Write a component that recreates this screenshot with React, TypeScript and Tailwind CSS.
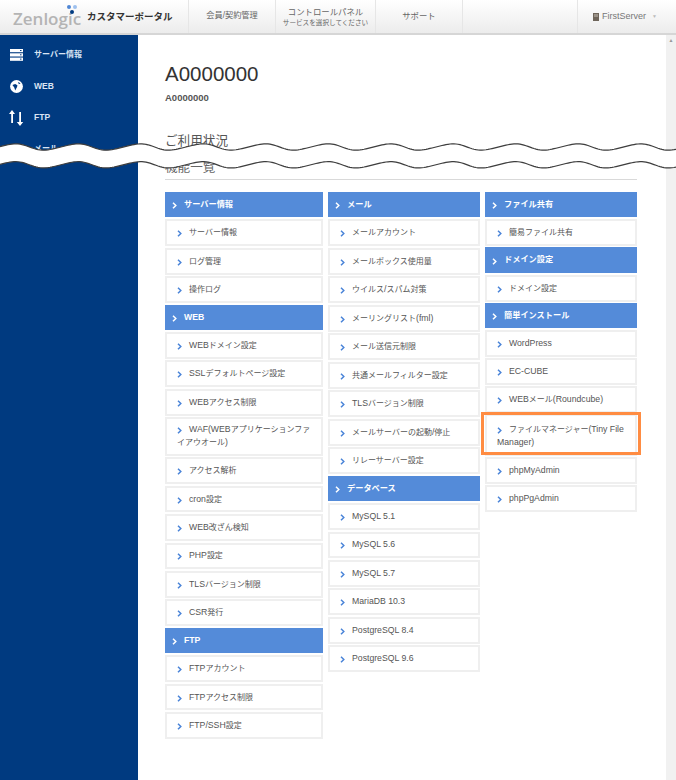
import type { ReactNode } from "react";

const F = '"Liberation Sans","Noto Sans CJK JP",sans-serif';

function Txt({ t, bold }: { t: string; bold?: boolean }) {
  const parts = t.split(/([\u3000-\u9fff\uff00-\uffef]+)/);
  return (
    <>
      {parts.map((p, i) =>
        i % 2 === 1 ? (
          <span key={i} className={bold ? "text-[8.2px]" : "text-[8px]"}>{p}</span>
        ) : (
          <span key={i}>{p}</span>
        )
      )}
    </>
  );
}

function Chevron({ white }: { white?: boolean }) {
  return (
    <svg width="5" height="7" viewBox="0 0 5 7" className="shrink-0 mt-[2px]">
      <path d="M1 0.8 L3.8 3.5 L1 6.2" fill="none" stroke={white ? "#ffffff" : "#4a84d8"} strokeWidth="1.5" />
    </svg>
  );
}

function Head({ t }: { t: string }) {
  return (
    <div className="h-[25.4px] mb-[1.95px] bg-[#548bd9] flex items-center gap-[7px] pl-[7px] text-[8.7px] font-bold text-white">
      <Chevron white />
      <span><Txt t={t} bold /></span>
    </div>
  );
}

function Item({ t, gap }: { t: string; gap: number }) {
  return (
    <div
      className="h-[26.8px] border-2 border-[#efefef] bg-white flex items-center gap-[7px] pl-[10px] text-[8.7px] text-[#555]"
      style={{ marginBottom: gap }}
    >
      <Chevron />
      <span><Txt t={t} /></span>
    </div>
  );
}

function TwoLine({ a, b, gap, pt, pb }: { a: string; b: string; gap: number; pt: number; pb: number }) {
  return (
    <div
      className="border-2 border-[#efefef] bg-white pl-[10px] text-[8.7px] leading-[13px] text-[#555]"
      style={{ marginBottom: gap, paddingTop: pt, paddingBottom: pb }}
    >
      <div className="flex items-center gap-[7px] h-[13px] whitespace-nowrap">
        <Chevron />
        <span><Txt t={a} /></span>
      </div>
      <div className="h-[13px] whitespace-nowrap"><Txt t={b} /></div>
    </div>
  );
}

type E = { h?: string; t?: string; a?: string; b?: string; hl?: boolean };
const col1: E[] = [
  { h: "サーバー情報" }, { t: "サーバー情報" }, { t: "ログ管理" }, { t: "操作ログ" },
  { h: "WEB" }, { t: "WEBドメイン設定" }, { t: "SSLデフォルトページ設定" }, { t: "WEBアクセス制限" },
  { a: "WAF(WEBアプリケーションファ", b: "イアウオール)" }, { t: "アクセス解析" }, { t: "cron設定" }, { t: "WEB改ざん検知" },
  { t: "PHP設定" }, { t: "TLSバージョン制限" }, { t: "CSR発行" },
  { h: "FTP" }, { t: "FTPアカウント" }, { t: "FTPアクセス制限" }, { t: "FTP/SSH設定" },
];
const col2: E[] = [
  { h: "メール" }, { t: "メールアカウント" }, { t: "メールボックス使用量" }, { t: "ウイルス/スパム対策" },
  { t: "メーリングリスト(fml)" }, { t: "メール送信元制限" }, { t: "共通メールフィルター設定" }, { t: "TLSバージョン制限" },
  { t: "メールサーバーの起動/停止" }, { t: "リレーサーバー設定" },
  { h: "データベース" }, { t: "MySQL 5.1" }, { t: "MySQL 5.6" }, { t: "MySQL 5.7" }, { t: "MariaDB 10.3" }, { t: "PostgreSQL 8.4" }, { t: "PostgreSQL 9.6" },
];
const col3: E[] = [
  { h: "ファイル共有" }, { t: "簡易ファイル共有" }, { h: "ドメイン設定" }, { t: "ドメイン設定" },
  { h: "簡単インストール" }, { t: "WordPress" }, { t: "EC-CUBE" }, { t: "WEBメール(Roundcube)" },
  { a: "ファイルマネージャー(Tiny File", b: "Manager)", hl: true }, { t: "phpMyAdmin" }, { t: "phpPgAdmin" },
];

function Column({ items, w, gap }: { items: E[]; w: string; gap: number }) {
  return (
    <div className={w}>
      {items.map((e, i) => {
        if (e.h) return <Head key={i} t={e.h} />;
        if (e.hl) {
          return (
            <div key={i} className="relative">
              <TwoLine a={e.a!} b={e.b!} gap={gap} pt={6.3} pb={5.3} />
              <div className="absolute -left-[4px] -right-[4px] -top-[2.5px] bottom-[1.4px] border-[3px] border-[#ff8c42]" />
            </div>
          );
        }
        if (e.a) return <TwoLine key={i} a={e.a} b={e.b!} gap={gap} pt={4.2} pb={4.15} />;
        return <Item key={i} t={e.t!} gap={gap} />;
      })}
    </div>
  );
}

function NavCell({ w, children }: { w: string; children?: ReactNode }) {
  return <div className={`${w} h-full border-r border-[#e6e6e6] flex flex-col items-center justify-center text-[#666]`}>{children}</div>;
}

function ServerIcon() {
  return (
    <svg width="13" height="12" viewBox="0 0 13 12" fill="#fff">
      <rect x="0" y="0" width="13" height="3.2" />
      <rect x="0" y="4.3" width="13" height="3.2" />
      <rect x="0" y="8.6" width="13" height="3.2" />
      <rect x="10" y="1" width="1.5" height="1" fill="#003a80" />
      <rect x="10" y="5.3" width="1.5" height="1" fill="#003a80" />
      <rect x="10" y="9.6" width="1.5" height="1" fill="#003a80" />
    </svg>
  );
}
function GlobeIcon() {
  return (
    <svg width="13" height="13" viewBox="0 0 14 14">
      <circle cx="7" cy="7" r="6.9" fill="#fff" />
      <path d="M2.6 5.4 L5.6 4.2 L8 5.6 L7.6 7.6 L5.6 11.2 L4.6 8.2 Z M8.5 2.2 L11.4 3.6 L9.6 4.6 Z" fill="#003a80" />
    </svg>
  );
}
function ArrowsIcon() {
  return (
    <svg width="16" height="17" viewBox="0 0 16 17" fill="#fff">
      <path d="M4 1 L7 5 L5 5 L5 14 L3.2 14 L3.2 5 L1 5 Z" />
      <path d="M12 17 L15.2 13 L13 13 L13 3 L11.2 3 L11.2 13 L8.8 13 Z" />
    </svg>
  );
}
function MailIcon() {
  return (
    <svg width="13" height="10" viewBox="0 0 13 10" fill="#fff"><rect width="13" height="10" /></svg>
  );
}

function SideRow({ icon, t }: { icon: ReactNode; t: string }) {
  return (
    <div className="h-[31.4px] flex items-center pl-[8px]">
      <div className="w-[16px] flex justify-center">{icon}</div>
      <span className="ml-[10px] text-[8.5px] text-[#d9e4f4] font-bold"><Txt t={t} /></span>
    </div>
  );
}

function wavePoints(off: number) {
  const pts: [number, number][] = [];
  for (let x = 0; x <= 676; x += 2) {
    const ph = (2 * Math.PI * (x - 14)) / 62.5;
    pts.push([x, 147 + off - 3.1 * Math.cos(ph) - 0.3 * Math.sin(2 * ph)]);
  }
  return pts;
}
const toLine = (p: [number, number][]) => p.map(([x, y], i) => `${i ? "L" : "M"}${x} ${y.toFixed(2)}`).join(" ");
const top = wavePoints(0);
const bot = wavePoints(17.8);
const band = toLine(top) + " " + [...bot].reverse().map(([x, y]) => `L${x} ${y.toFixed(2)}`).join(" ") + " Z";

export default function App() {
  return (
    <div className="relative w-[676px] h-[780px] overflow-hidden bg-white" style={{ fontFamily: F }}>
      <header className="h-[35px] flex bg-gradient-to-b from-white to-[#ececec] border-b-2 border-[#d6d6d6]">
        <div className="w-[189px] h-full border-r border-[#e6e6e6] flex items-center relative">
          <span className="ml-[13px] text-[17px] text-[#b4b4b4] leading-none mt-[3px]" style={{ fontFamily: '"Open Sans",sans-serif', fontWeight: 600 }}>Zenlogic</span>
          <span className="ml-[6px] text-[9.5px] font-bold text-[#333] mt-[2px] whitespace-nowrap">カスタマーポータル</span>
          <span className="absolute left-[67px] top-[5px] w-[4px] h-[4px] rounded-full bg-[#4f86d4]" />
          <span className="absolute left-[73px] top-[5px] w-[4px] h-[4px] rounded-full bg-[#9dc0ee]" />
          <span className="absolute left-[70px] top-[10px] w-[4px] h-[4px] rounded-full bg-[#003a80]" />
        </div>
        <NavCell w="w-[87px]"><span className="text-[8.2px]">会員/契約管理</span></NavCell>
        <NavCell w="w-[100px]">
          <span className="text-[8.4px] leading-[11px]">コントロールパネル</span>
          <span className="text-[6.6px] leading-[9px] whitespace-nowrap">サービスを選択してください</span>
        </NavCell>
        <NavCell w="w-[87px]"><span className="text-[8.4px]">サポート</span></NavCell>
        <NavCell w="w-[115px]" />
        <div className="flex-1 flex items-center pl-[15px] text-[9px] text-[#777] gap-[3px]">
          <svg width="6" height="8" viewBox="0 0 6 8"><rect width="6" height="8" fill="#6e655a" /><rect x="1" y="1" width="4" height="3" fill="#9a9288" /></svg>
          <span>FirstServer</span>
          <span className="ml-[3px] text-[5px] text-[#bbb]">▼</span>
        </div>
      </header>
      <div className="flex h-[745px]">
        <aside className="w-[138px] bg-[#003a80] pt-[4px] shrink-0">
          <SideRow icon={<ServerIcon />} t="サーバー情報" />
          <SideRow icon={<GlobeIcon />} t="WEB" />
          <SideRow icon={<ArrowsIcon />} t="FTP" />
          <SideRow icon={<MailIcon />} t="メール" />
        </aside>
        <main className="w-[528px] pl-[27px] pr-[29px]">
          <h1 className="mt-[27px] text-[20.5px] leading-[24px] text-[#333]">A0000000</h1>
          <p className="mt-[6px] text-[9.5px] leading-[12px] font-bold text-[#555]">A0000000</p>
          <h2 className="mt-[28px] text-[12.6px] leading-[18px] text-[#555]">ご利用状況</h2>
          <h3 className="mt-[9px] pb-[4px] text-[12.6px] leading-[16px] text-[#666] border-b border-[#d9d9d9]">機能一覧</h3>
          <div className="mt-[12px] flex gap-[5px]">
            <Column items={col1} w="w-[158px]" gap={1.65} />
            <Column items={col2} w="w-[152px]" gap={1.7} />
            <Column items={col3} w="w-[152px]" gap={1.3} />
          </div>
        </main>
        <div className="flex-1 bg-[#f1f1f1] flex justify-center pt-[3px]">
          <span className="text-[5px] leading-none text-[#999]">▲</span>
        </div>
      </div>
      <svg className="absolute left-0 top-0 pointer-events-none" width="676" height="180" viewBox="0 0 676 180">
        <path d={band} fill="#fff" />
        <path d={toLine(top)} fill="none" stroke="#3d3d3d" strokeWidth="1.2" />
        <path d={toLine(bot)} fill="none" stroke="#3d3d3d" strokeWidth="1.2" />
      </svg>
    </div>
  );
}
